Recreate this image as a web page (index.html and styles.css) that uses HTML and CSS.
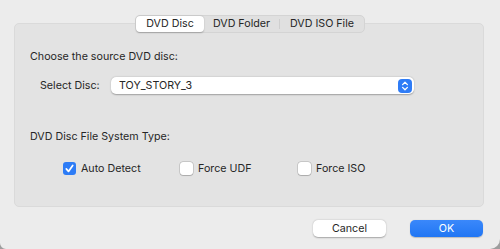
FILE: index.html
```html
<!DOCTYPE html>
<html>
<head>
<meta charset="utf-8">
<link rel="stylesheet" href="styles.css">
</head>
<body>
<div class="window">
  <div class="tabs-row">
    <div class="tabs">
      <div class="tab tab-active">DVD Disc</div>
      <div class="tab tab-folder">DVD Folder</div>
      <div class="tab-sep"></div>
      <div class="tab tab-iso">DVD ISO File</div>
    </div>
  </div>
  <div class="group">
    <div class="heading heading-source">Choose the source DVD disc:</div>
    <div class="select-row">
      <span class="select-label">Select Disc:</span>
      <div class="popup">
        <span class="popup-value">TOY_STORY_3</span>
        <span class="stepper">
          <svg width="14" height="14" viewBox="0 0 14 14">
            <path d="M4.6 5.6 L7 3.3 L9.4 5.6" fill="none" stroke="#fff" stroke-width="1.3" stroke-linecap="round" stroke-linejoin="round"/>
            <path d="M4.6 8.4 L7 10.7 L9.4 8.4" fill="none" stroke="#fff" stroke-width="1.3" stroke-linecap="round" stroke-linejoin="round"/>
          </svg>
        </span>
      </div>
    </div>
    <div class="heading heading-fs">DVD Disc File System Type:</div>
    <div class="checks">
      <label class="check check-auto">
        <span class="box box-on">
          <svg width="13" height="13" viewBox="0 0 13 13">
            <path d="M3.3 6.9 L5.5 9.4 L9.7 3.5" fill="none" stroke="#fff" stroke-width="1.7" stroke-linecap="round" stroke-linejoin="round"/>
          </svg>
        </span>
        <span>Auto Detect</span>
      </label>
      <label class="check check-udf">
        <span class="box"></span>
        <span>Force UDF</span>
      </label>
      <label class="check check-iso">
        <span class="box"></span>
        <span>Force ISO</span>
      </label>
    </div>
  </div>
  <div class="buttons">
    <div class="btn btn-cancel">Cancel</div>
    <div class="btn btn-ok">OK</div>
  </div>
</div>
</body>
</html>
```
FILE: styles.css
```css
html, body {
  margin: 0;
  padding: 0;
}
body {
  width: 500px;
  height: 249px;
  background: #9d9d9d;
  font-family: "Inter", "Liberation Sans", sans-serif;
  font-size: 10.7px;
  color: #262626;
  overflow: hidden;
  white-space: nowrap;
}
.window {
  width: 500px;
  height: 249px;
  background: #ececec;
  border-radius: 0 0 10px 6px;
  box-sizing: border-box;
  padding-top: 15px;
}
.tabs-row {
  display: flex;
  justify-content: center;
  position: relative;
  z-index: 2;
}
.tabs {
  display: flex;
  align-items: center;
  height: 18px;
  box-sizing: border-box;
  background: #e0e0e0;
  border: 1px solid #d4d4d4;
  border-radius: 5px;
}
.tab {
  height: 16px;
  line-height: 16px;
  text-align: center;
  box-sizing: border-box;
  color: #262626;
}
.tab-active {
  width: 68px;
  background: #fff;
  border-radius: 4px;
  box-shadow: 0 0.5px 1.5px rgba(0,0,0,0.25);
}
.tab-folder {
  width: 75px;
}
.tab-sep {
  width: 1px;
  height: 10px;
  background: #cfcfcf;
}
.tab-iso {
  width: 84px;
}
.group {
  margin: -10px 16px 0 14px;
  height: 184px;
  box-sizing: border-box;
  background: #e3e3e3;
  border: 1px solid #dadada;
  border-radius: 5px;
  padding: 25px 0 0 15px;
}
.heading {
  line-height: 16px;
  height: 16px;
}
.select-row {
  display: flex;
  align-items: center;
  height: 17px;
  margin-top: 12px;
  padding-left: 10px;
}
.select-label {
  width: 71px;
}
.popup {
  display: flex;
  align-items: center;
  justify-content: space-between;
  width: 303px;
  height: 17px;
  box-sizing: border-box;
  background: #fff;
  border-radius: 5px;
  box-shadow: 0 0.5px 1.5px rgba(0,0,0,0.3);
  padding: 0 2px 0 8px;
}
.popup-value {
  line-height: 16px;
}
.stepper {
  display: flex;
  width: 14px;
  height: 14px;
  background: #2f7cf6;
  border-radius: 4px;
}
.heading-fs {
  margin-top: 35px;
}
.checks {
  display: flex;
  align-items: center;
  height: 13px;
  margin-top: 17px;
  padding-left: 33px;
}
.check {
  display: flex;
  align-items: center;
  gap: 5px;
}
.check-auto { width: 117px; }
.check-udf { width: 118px; }
.box {
  display: flex;
  width: 13px;
  height: 13px;
  box-sizing: border-box;
  background: #fff;
  border-radius: 3px;
  box-shadow: 0 0 0 0.5px rgba(0,0,0,0.22), 0 0.5px 1px rgba(0,0,0,0.15);
}
.box-on {
  background: #2d7cf6;
  box-shadow: none;
}
.buttons {
  display: flex;
  justify-content: flex-end;
  gap: 24px;
  margin-top: 13px;
  padding-right: 17px;
}
.btn {
  width: 73px;
  height: 17px;
  line-height: 17px;
  text-align: center;
  border-radius: 5px;
  box-sizing: border-box;
}
.btn-cancel {
  background: #fff;
  box-shadow: 0 0.5px 1.5px rgba(0,0,0,0.3);
}
.btn-ok {
  background: linear-gradient(#3a88fb, #2176f3);
  color: #fff;
  box-shadow: 0 0.5px 1px rgba(0,0,0,0.2);
}
```
